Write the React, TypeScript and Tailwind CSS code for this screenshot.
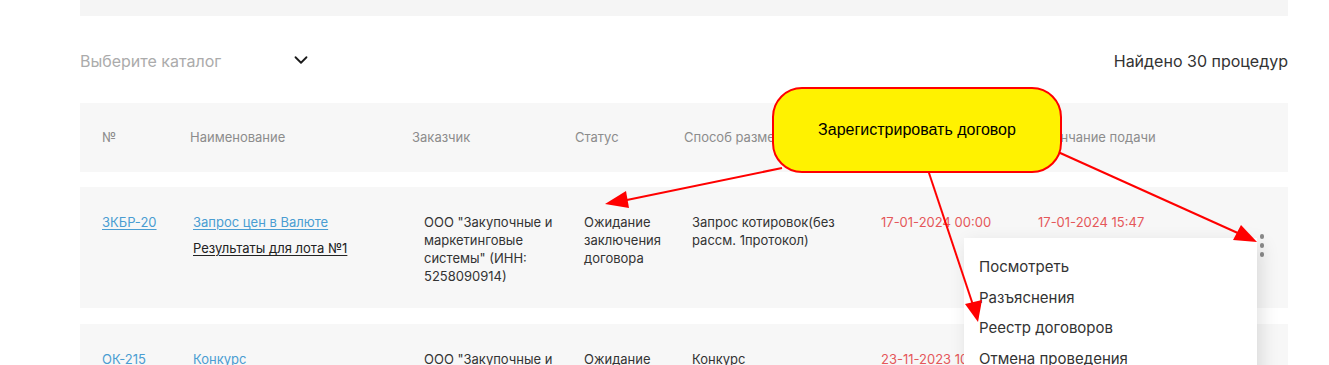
import { ChevronDown } from "lucide-react";

const rows = [
  {
    num: "ЗКБР-20",
    name: "Запрос цен в Валюте",
    lot: "Результаты для лота №1",
    customer: 'ООО "Закупочные и маркетинговые системы" (ИНН: 5258090914)',
    status: "Ожидание заключения договора",
    method: "Запрос котировок(без рассм. 1протокол)",
    start: "17-01-2024 00:00",
    end: "17-01-2024 15:47",
  },
  {
    num: "ОК-215",
    name: "Конкурс",
    lot: "",
    customer: 'ООО "Закупочные и маркетинговые системы" (ИНН: 5258090914)',
    status: "Ожидание заключения договора",
    method: "Конкурс",
    start: "23-11-2023 10:00",
    end: "23-11-2023 15:00",
  },
];

const menu = ["Посмотреть", "Разъяснения", "Реестр договоров", "Отмена проведения"];

function Kebab() {
  return (
    <div className="flex flex-col items-center gap-[4.5px]">
      <span className="w-[4.5px] h-[4.5px] rounded-full bg-[#8a8a8a]" />
      <span className="w-[4.5px] h-[4.5px] rounded-full bg-[#8a8a8a]" />
      <span className="w-[4.5px] h-[4.5px] rounded-full bg-[#8a8a8a]" />
    </div>
  );
}

function Annotation() {
  return (
    <>
      <svg className="absolute inset-0 pointer-events-none z-20" width="1329" height="365">
        <g stroke="#ff0000" strokeWidth="2" fill="none">
          <line x1="782" y1="168" x2="622" y2="201" />
          <line x1="928" y1="170" x2="973" y2="305" />
          <line x1="1058" y1="152" x2="1240" y2="234" />
        </g>
        <g fill="#ff0000">
          <polygon points="605,204 626,191 629,208" />
          <polygon points="978,322 965,304 982,300" />
          <polygon points="1257,242 1233,240 1241,225" />
        </g>
      </svg>
      <div className="absolute left-[772px] top-[87px] w-[290px] h-[86px] z-30 rounded-[30px] border-2 border-[#ff0000] bg-[#fff200] flex items-center justify-center pb-[1px]">
        <span className="font-['Liberation_Sans',sans-serif] text-[16px] text-black">Зарегистрировать договор</span>
      </div>
    </>
  );
}

export default function App() {
  return (
    <div className="relative w-[1329px] h-[365px] overflow-hidden bg-white font-['Inter',sans-serif]">
      <div className="mx-[80px] w-[1208px]">
        <div className="h-[16px] bg-[#f5f5f5]" />

        {/* filter */}
        <div className="flex items-center justify-between h-[87px] pt-[3px]">
          <div className="flex items-center">
            <span className="w-[210px] text-[16px] text-[#ababab]">Выберите каталог</span>
            <ChevronDown className="w-[22px] h-[22px] text-[#1a1a1a] -mt-[2px]" strokeWidth={2} />
          </div>
          <span className="text-[16px] text-[#333]">Найдено 30 процедур</span>
        </div>

        {/* head */}
        <div className="flex items-center h-[69px] bg-[#f7f7f7] pl-[22px] text-[13px] text-[#8c8c8c]">
          <div className="w-[88px]">№</div>
          <div className="w-[222px]">Наименование</div>
          <div className="w-[163px]">Заказчик</div>
          <div className="w-[109px]">Статус</div>
          <div className="w-[196px]">Способ размещения</div>
          <div className="w-[156px]">Дата публикации</div>
          <div>Окончание подачи</div>
        </div>

        {/* rows */}
        <div className="flex flex-col gap-[16px] mt-[15px]">
          {rows.map((r, i) => (
            <div key={i} className="relative flex h-[121px] bg-[#f7f7f7] pl-[22px] pt-[26px] text-[13px] leading-[18px] text-[#333]">
              <div className="w-[91px]">
                <a className="text-[#4a9dd2] underline underline-offset-2">{r.num}</a>
              </div>
              <div className="w-[231px] flex flex-col gap-[8px]">
                <a className="text-[#4a9dd2] underline underline-offset-2">{r.name}</a>
                {r.lot && <a className="text-[#222] underline underline-offset-2">{r.lot}</a>}
              </div>
              <div className="w-[160px]">
                <div className="w-[142px]">{r.customer}</div>
              </div>
              <div className="w-[108px]">
                <div className="w-[90px]">{r.status}</div>
              </div>
              <div className="w-[189px]">
                <div className="w-[150px]">{r.method}</div>
              </div>
              <div className="w-[157px] text-[#e5575a]">{r.start}</div>
              <div className="w-[200px] text-[#e5575a]">{r.end}</div>
              <div className="absolute right-[24px] top-[47px]">
                <Kebab />
              </div>
              {i === 0 && (
                <div className="absolute left-[884px] top-[51px] w-[293px] h-[160px] z-10 bg-white pt-[14px] pl-[15px] shadow-[4px_6px_18px_rgba(0,0,0,0.12)]">
                  {menu.map((m) => (
                    <div key={m} className="h-[30.7px] leading-[30.7px] text-[15px] text-[#333]">{m}</div>
                  ))}
                </div>
              )}
            </div>
          ))}
        </div>
      </div>
      <Annotation />
    </div>
  );
}
